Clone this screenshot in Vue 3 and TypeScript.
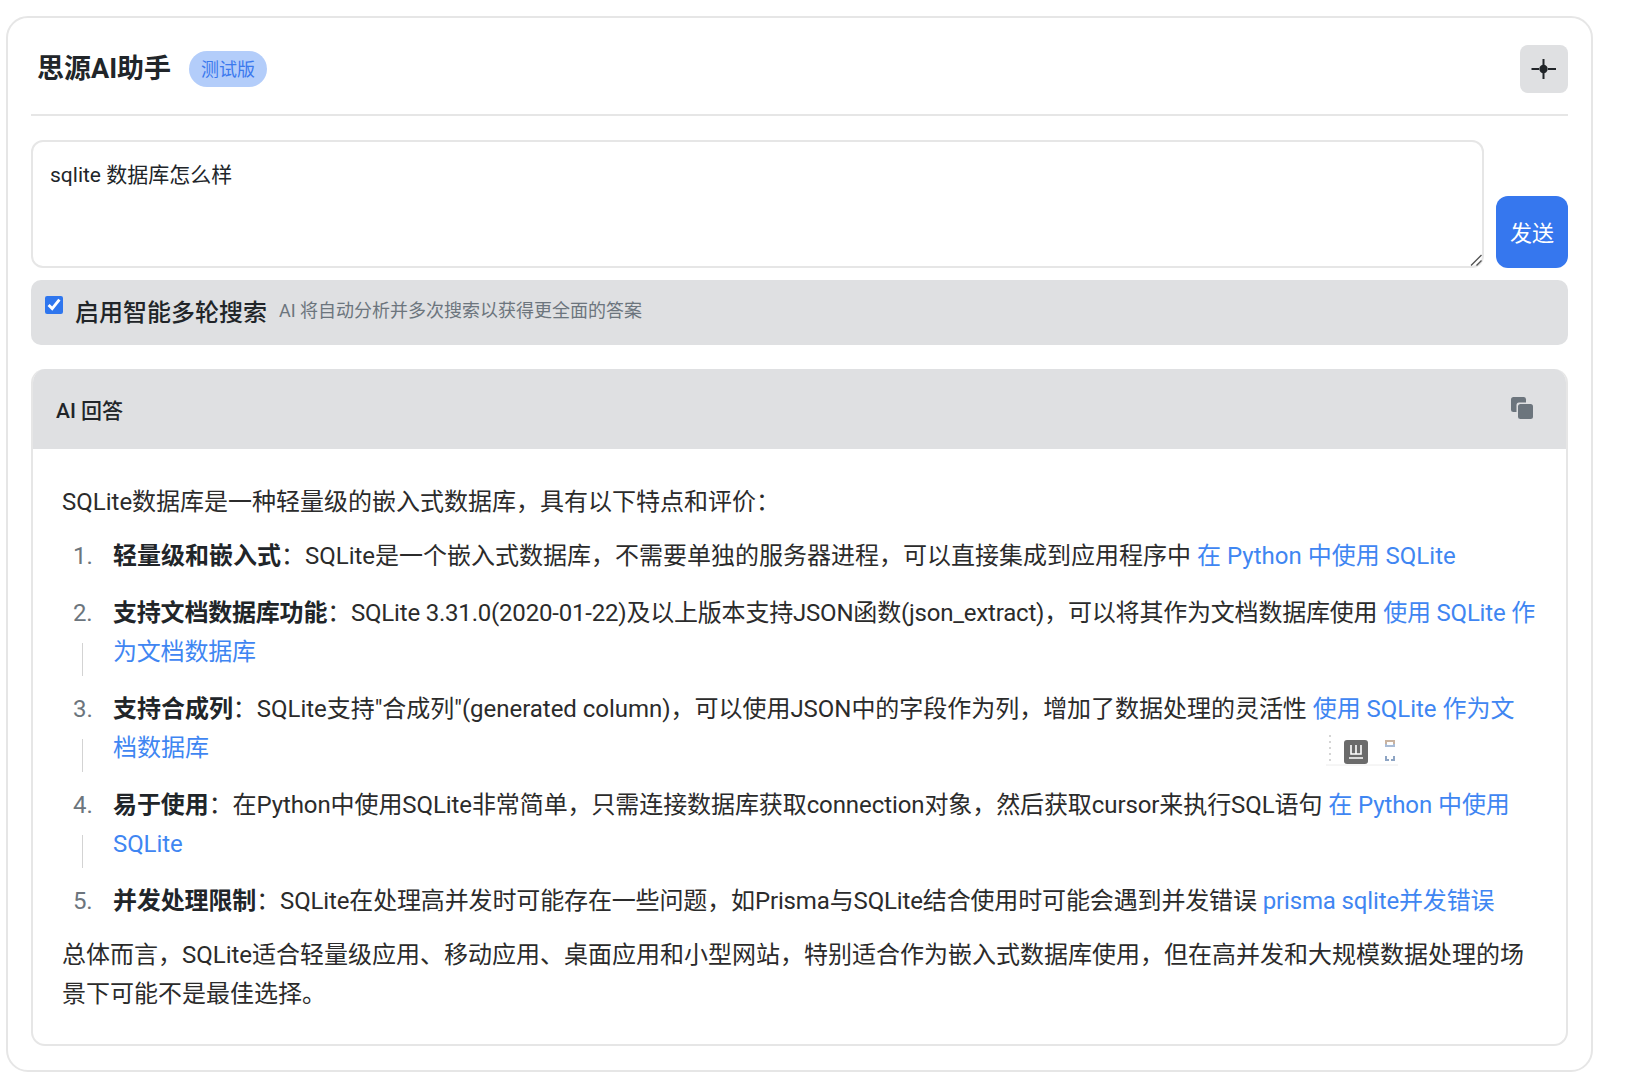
<script setup lang="ts">
interface Item { title: string; body: string; link: string; track: string; wrapped?: boolean }
const question = 'sqlite 数据库怎么样'
const items: Item[] = [
  { title: '轻量级和嵌入式', body: 'SQLite是一个嵌入式数据库，不需要单独的服务器进程，可以直接集成到应用程序中', link: '在 Python 中使用 SQLite', track: '0px' },
  { title: '支持文档数据库功能', body: 'SQLite 3.31.0(2020-01-22)及以上版本支持JSON函数(json_extract)，可以将其作为文档数据库使用', link: '使用 SQLite 作为文档数据库', track: '-0.2px', wrapped: true },
  { title: '支持合成列', body: 'SQLite支持"合成列"(generated column)，可以使用JSON中的字段作为列，增加了数据处理的灵活性', link: '使用 SQLite 作为文档数据库', track: '-0.03px', wrapped: true },
  { title: '易于使用', body: '在Python中使用SQLite非常简单，只需连接数据库获取connection对象，然后获取cursor来执行SQL语句', link: '在 Python 中使用 SQLite', track: '-0.09px', wrapped: true },
  { title: '并发处理限制', body: 'SQLite在处理高并发时可能存在一些问题，如Prisma与SQLite结合使用时可能会遇到并发错误', link: 'prisma sqlite并发错误', track: '-0.14px' },
]
</script>

<template>
  <div class="page">
    <section class="card">
      <header class="head">
        <div class="title-wrap">
          <h1 class="title">思源AI助手</h1>
          <span class="badge">测试版</span>
        </div>
        <button class="pin" type="button" aria-label="固定">
          <svg width="26" height="22" viewBox="0 0 26 22" fill="none" stroke="#212529" stroke-width="2">
            <path d="M0.5 11H8M17 11H25M12.5 1V7M12.5 15V21" />
            <circle cx="12.5" cy="11" r="4.2" fill="#212529" stroke="none" />
          </svg>
        </button>
      </header>

      <div class="ask">
        <div class="input-wrap">
          <textarea class="input" :value="question"></textarea>
          <svg class="grip" width="12" height="12" viewBox="0 0 12 12" fill="none" stroke="#555" stroke-width="1.4" aria-hidden="true">
            <path d="M1 11.5L11.5 1M6.5 11.5L11.5 6.5" />
          </svg>
        </div>
        <button class="send" type="button">发送</button>
      </div>

      <div class="option">
        <input class="check" type="checkbox" checked />
        <span class="opt-label">启用智能多轮搜索</span>
        <span class="opt-hint">AI 将自动分析并多次搜索以获得更全面的答案</span>
      </div>

      <div class="answer">
        <div class="answer-head">
          <span class="answer-title">AI 回答</span>
          <svg class="copy" width="22" height="22" viewBox="0 0 22 22">
            <rect x="0" y="0" width="15" height="15" rx="2.5" fill="#6c757d" />
            <rect x="5.5" y="5.5" width="16.5" height="16.5" rx="2.5" fill="#dfe0e2" />
            <rect x="7" y="7" width="15" height="15" rx="2.5" fill="#6c757d" />
          </svg>
        </div>
        <div class="answer-body">
          <p class="para">SQLite数据库是一种轻量级的嵌入式数据库，具有以下特点和评价：</p>
          <ol class="list">
            <li v-for="item in items" :key="item.title" class="li" :class="{ wrapped: item.wrapped }" :style="{ letterSpacing: item.track }">
              <strong class="strong">{{ item.title }}</strong>：{{ item.body }} <a class="link" href="#">{{ item.link }}</a>
            </li>
          </ol>
          <p class="para">总体而言，SQLite适合轻量级应用、移动应用、桌面应用和小型网站，特别适合作为嵌入式数据库使用，但在高并发和大规模数据处理的场景下可能不是最佳选择。</p>
          <div class="stamp" aria-hidden="true">
            <svg width="72" height="36" viewBox="0 0 72 36" fill="none">
              <path d="M4 2V31" stroke="#d5d5d5" stroke-width="2" stroke-dasharray="2 4" />
              <path d="M0 32H72" stroke="#ececec" stroke-width="1" />
              <rect x="18" y="7" width="24" height="24" rx="3" fill="#6b6b6b" />
              <path d="M23 25H37M25 12V21H35V12M30 12V21" stroke="#fff" stroke-width="1.6" />
              <path d="M60 11V8H68V11" stroke="#c9b3a0" stroke-width="2" />
              <path d="M60 11V13H68V11" stroke="#a9bcd6" stroke-width="2" />
              <path d="M60 23V27H63M68 23V27H65" stroke="#8ea5c4" stroke-width="2" />
            </svg>
          </div>
        </div>
      </div>
    </section>
  </div>
</template>

<style>
html, body { background: #fff; }
</style>

<style scoped>
.page {
  padding: 16px 39px 13px 6px;
  font-family: Roboto, "Noto Sans CJK SC", sans-serif;
  color: #212529;
}
.card {
  border: 2px solid #e6e6e6;
  border-radius: 22px;
  padding: 0 23px 24px;
  background: #fff;
}
.head {
  display: flex;
  align-items: center;
  justify-content: space-between;
  height: 98px;
  padding-top: 6px;
  box-sizing: border-box;
  border-bottom: 2px solid #e6e6e6;
}
.title-wrap { display: flex; align-items: center; gap: 18px; padding-left: 6px; }
.title { margin: 0; font-size: 27px; font-weight: 700; line-height: 1.2; }
.badge {
  display: inline-flex;
  align-items: center;
  justify-content: center;
  box-sizing: border-box;
  width: 78px;
  height: 36px;
  padding-bottom: 2px;
  border-radius: 18px;
  background: #b3cdfa;
  color: #3b79ee;
  font-size: 18px;
}
.pin {
  width: 48px;
  height: 48px;
  border: none;
  border-radius: 8px;
  background: #dfe0e2;
  display: flex;
  align-items: center;
  justify-content: center;
  padding: 0;
}
.ask { display: flex; align-items: flex-end; gap: 12px; margin-top: 24px; }
.input-wrap { flex: 1; position: relative; line-height: 0; }
.input {
  width: 100%;
  height: 128px;
  box-sizing: border-box;
  border: 2px solid #e6e6e6;
  border-radius: 12px;
  padding: 18px 17px 12px;
  font: inherit;
  font-size: 21px;
  line-height: 1.5;
  color: #212529;
  resize: none;
  outline: none;
}
.grip { position: absolute; right: 2px; bottom: 2px; }
.send {
  width: 72px;
  height: 72px;
  border: none;
  border-radius: 12px;
  background: #3677ee;
  color: #fff;
  font: inherit;
  font-size: 22px;
  padding: 0 0 3px;
}
.option {
  display: flex;
  align-items: center;
  height: 65px;
  margin-top: 12px;
  border-radius: 10px;
  background: #dfe0e2;
  padding-left: 14px;
}
.check {
  width: 18px;
  height: 18px;
  margin: 16px 12px 0 0;
  accent-color: #2f76ee;
  align-self: flex-start;
}
.opt-label { font-size: 24px; font-weight: 500; line-height: 65px; padding-top: 2px; }
.opt-hint { font-size: 18px; color: #6c757d; margin-left: 12px; padding-bottom: 7px; }
.answer {
  margin-top: 24px;
  border: 2px solid #e6e6e6;
  border-top: none;
  border-radius: 14px;
  overflow: hidden;
}
.answer-head {
  display: flex;
  align-items: center;
  justify-content: space-between;
  height: 80px;
  margin: 0 -2px;
  padding: 0 35px 0 25px;
  background: #dfe0e2;
}
.answer-title { font-size: 21px; font-weight: 500; }
.copy { display: block; margin-top: -3px; }
.answer-body {
  position: relative;
  padding: 34px 30px 30px 29px;
  font-size: 24px;
  line-height: 39px;
  color: #2b2b2b;
}
.para { margin: 0; }
.list { margin: 15px 0 15px; padding: 0 0 0 51px; list-style: none; counter-reset: n; }
.li { margin-bottom: 18px; position: relative; counter-increment: n; }
.li:last-child { margin-bottom: 0; }
.li::before {
  content: counter(n) ".";
  position: absolute;
  left: -40px;
  top: 0;
  color: #6c757d;
}
.li.wrapped::after {
  content: "";
  position: absolute;
  left: -31px;
  top: 49px;
  width: 1px;
  height: 33px;
  background: #d3d3d3;
}
.strong { font-weight: 700; color: #212529; }
.link { color: #3f86f2; text-decoration: none; }
.stamp { position: absolute; left: 1293px; top: 284px; line-height: 0; }
</style>
